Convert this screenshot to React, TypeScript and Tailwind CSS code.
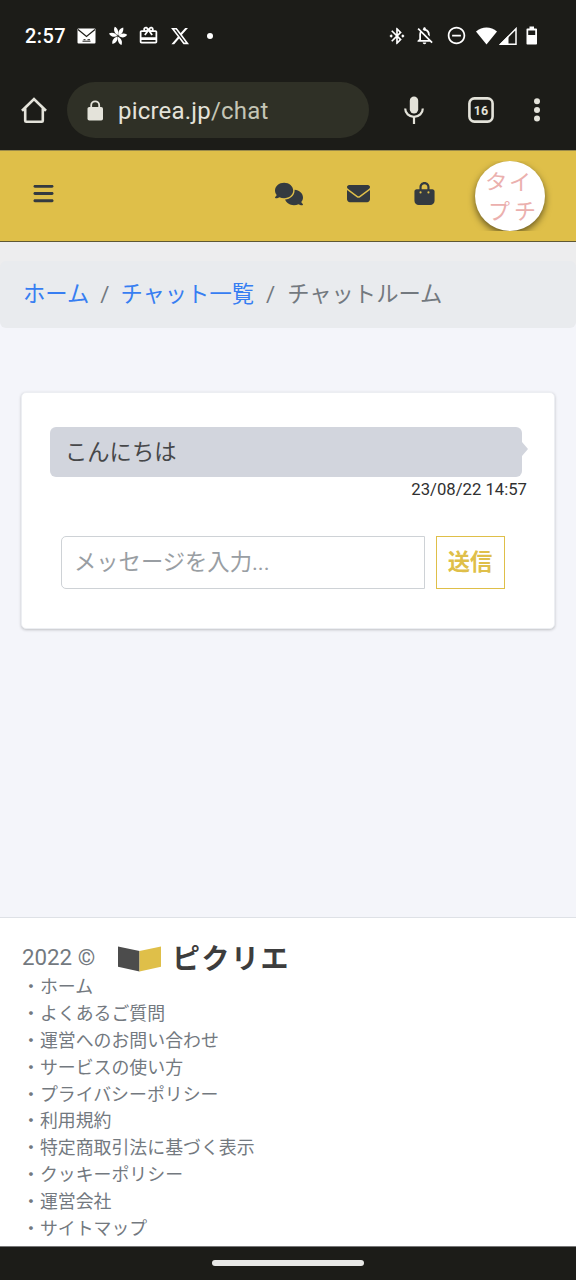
import { FaBagShopping, FaBars, FaComments, FaEnvelope, FaXTwitter } from 'react-icons/fa6'
import {
  MdBluetoothConnected,
  MdCardGiftcard,
  MdOutlineNotificationsOff,
  MdRemoveCircleOutline,
} from 'react-icons/md'

const footerLinks = [
  'ホーム',
  'よくあるご質問',
  '運営へのお問い合わせ',
  'サービスの使い方',
  'プライバシーポリシー',
  '利用規約',
  '特定商取引法に基づく表示',
  'クッキーポリシー',
  '運営会社',
  'サイトマップ',
]

function MailIcon() {
  return (
    <svg width="19" height="16" viewBox="0 0 19 16">
      <rect x="0.5" y="0.5" width="18" height="15" rx="1" fill="#fff" />
      <path d="M1 1.5l8.5 7 8.5-7" fill="none" stroke="#1c1c18" strokeWidth="1.2" />
      <path d="M5.5 13.2h8M6.5 11.7h2M10.5 11.7h2.5" stroke="#1c1c18" strokeWidth="1" />
    </svg>
  )
}

function FlowerIcon() {
  return (
    <svg width="20" height="20" viewBox="0 0 20 20" fill="#fff">
      <path d="M9.500 9.500C5.800 6.500 5.400 3.200 6.800.8c3 1.400 4.100 4.800 2.700 8.700z" />
      <path d="M10.300 9.500c-.6-4.300 1.500-7.200 4.900-8 .7 3.600-1.100 6.800-4.900 8z" />
      <path d="M9.300 10C6.200 11.800 2.600 10.500 1 7.400 4 5.800 7.600 6.800 9.300 10z" />
      <path d="M10.800 10c1.900-2.700 5.300-3.200 8.400-1.200-2.100 3-5.500 3.500-8.400 1.200z" />
      <path d="M9.600 10.500c.5 3.900-1.600 6.600-5.200 7.400-.7-3.600 1.500-6.500 5.200-7.400z" />
      <path d="M10.200 10.700c3.100 1.500 4.500 4.900 3.300 8.300-3-1.400-4.400-4.900-3.300-8.300z" />
    </svg>
  )
}

function StatusBar() {
  return (
    <div className="flex h-[70px] items-center justify-between pt-[1px] pr-[38px] pl-[25px] text-white">
      <div className="flex items-center">
        <span className="w-[52px] text-[20px] leading-none font-medium tracking-[0.4px]">2:57</span>
        <MailIcon />
        <span className="ml-[12px]"><FlowerIcon /></span>
        <MdCardGiftcard size={21} className="ml-[10px]" />
        <FaXTwitter size={20} className="ml-[11px]" />
        <span className="ml-[17px] size-[6px] rounded-full bg-white" />
      </div>
      <div className="flex items-center">
        <MdBluetoothConnected size={20} />
        <MdOutlineNotificationsOff size={21} className="ml-[7px]" />
        <MdRemoveCircleOutline size={21} className="ml-[11px]" />
        <svg className="ml-[9px]" width="21" height="18" viewBox="0 0 21 18">
          <path d="M0 4.500C6-1 15-1 21 4.500L10.500 17.500z" fill="#fff" />
        </svg>
        <svg className="ml-[2px]" width="18" height="18" viewBox="0 0 18 18">
          <path d="M1.500 17.200L17 1.700v15.500z" fill="none" stroke="#fff" strokeWidth="1.500" />
          <path d="M0.500 17.500L9.500 8.500v9z" fill="#fff" />
        </svg>
        <svg className="ml-[9px]" width="12" height="19" viewBox="0 0 12 19">
          <path d="M3.500 0.500h4.500v2h2.200q.8 0 .8.800v14.400q0 .8-.8.800H1.300q-.8 0-.8-.8V3.300q0-.8.8-.8h2.200z" fill="#fff" />
          <path d="M2.200 4.500h7v4.500h-7z" fill="#1c1c18" />
        </svg>
      </div>
    </div>
  )
}

function BrowserBar() {
  return (
    <div className="flex h-[80px] items-center text-[#e4e3da]">
      <svg className="ml-[21px]" width="26" height="27" viewBox="0 0 26 27" fill="none" stroke="currentColor" strokeWidth="2.600">
        <path d="M1 13.800L13 2l12 11.800M4.200 11.500v12.200c0 .6.5 1 1 1h15.600c.5 0 1-.4 1-1V11.500" />
      </svg>
      <div className="ml-[20px] flex h-[56px] w-[302px] items-center rounded-full bg-[#2f3026]">
        <svg className="ml-[20px]" width="17" height="21" viewBox="0 0 17 21">
          <rect x="0.500" y="7" width="15.500" height="13.500" rx="1.800" fill="currentColor" />
          <path d="M4.200 8V5.300a4 4 0 0 1 8 0V8" fill="none" stroke="currentColor" strokeWidth="1.800" />
        </svg>
        <span className="ml-[14px] pt-[2px] text-[24px] leading-none tracking-[0.2px]">
          picrea.jp<span className="text-[#c4c5b5]">/chat</span>
        </span>
      </div>
      <svg className="ml-[35px]" width="20" height="29" viewBox="0 0 20 29">
        <rect x="5.800" y="0.500" width="8.400" height="17" rx="4.200" fill="currentColor" />
        <path d="M1.200 12.500c0 4.700 3.700 8.300 8.800 8.300s8.800-3.600 8.800-8.300M10 21v7" fill="none" stroke="currentColor" strokeWidth="2.200" />
      </svg>
      <svg className="ml-[44px]" width="26" height="26" viewBox="0 0 26 26">
        <rect x="1.400" y="1.400" width="23.200" height="23.200" rx="5" fill="none" stroke="currentColor" strokeWidth="2.600" />
        <text x="13" y="17.500" textAnchor="middle" fontSize="12.500" fontWeight="700" fill="currentColor">16</text>
      </svg>
      <svg className="ml-[39px]" width="8" height="24" viewBox="0 0 8 24" fill="currentColor">
        <circle cx="4" cy="3.300" r="3" />
        <circle cx="4" cy="12" r="3" />
        <circle cx="4" cy="20.500" r="3" />
      </svg>
    </div>
  )
}

function Avatar() {
  return (
    <div className="mb-[1px] ml-[31px] h-[70px] w-[86px] overflow-hidden px-[8px]">
      <div className="size-[70px] rounded-full bg-white pt-[7px] text-[22px] leading-[29px] text-[#ebb0ae] shadow-[0_3px_7px_rgba(0,0,0,0.55)]">
        <div className="flex gap-[2px] pl-[10px]">
          <span className="w-[22px] rotate-[6deg]">タ</span>
          <span className="w-[22px]">イ</span>
        </div>
        <div className="flex gap-[3px] pl-[13px]">
          <span className="w-[23px]">プ</span>
          <span className="w-[22px]">チ</span>
        </div>
      </div>
    </div>
  )
}

function Header() {
  return (
    <header className="flex h-[92px] items-center border-t border-b border-t-[#9a8a4b] border-b-[#5f5834] bg-[#dfbf49] text-[#343a40]">
      <FaBars size={23} className="mb-[5px] ml-[32px]" />
      <FaComments size={28} className="mb-[5px] ml-[220px]" />
      <FaEnvelope size={23} className="mb-[5px] ml-[44px]" />
      <FaBagShopping size={23} className="mb-[5px] ml-[43px]" />
      <Avatar />
    </header>
  )
}

function Breadcrumb() {
  return (
    <div className="bg-[linear-gradient(#ededee_50%,#f4f5fa_50%)] pt-[19px]">
      <nav className="flex h-[67px] items-center rounded-[6px] bg-[#e9ebee] pl-[23px] text-[22.300px] text-[#73797f] shadow-[0_-8px_0_#ededee]">
        <a className="text-[#377ef2]">ホーム</a>
        <span className="mx-[11px]">/</span>
        <a className="text-[#377ef2]">チャット一覧</a>
        <span className="mr-[12px] ml-[12px]">/</span>
        <span>チャットルーム</span>
      </nav>
    </div>
  )
}

function ChatCard() {
  return (
    <section className="mx-[21px] mt-[64px] h-[237px] rounded-[5px] border border-[#eceef2] bg-white pt-[34px] shadow-[0_1px_3px_rgba(0,0,0,0.22)]">
      <div className="relative ml-[28px] flex h-[50px] w-[472px] items-center rounded-[6px] bg-[#d2d5dd] pt-[1px] pl-[15px] text-[22.300px] text-[#464749]">
        こんにちは
        <span className="absolute top-[15px] left-full border-y-[7px] border-l-[6px] border-y-transparent border-l-[#d2d5dd]" />
      </div>
      <div className="mr-[27px] pt-[2px] text-right text-[16.700px] leading-[22px] text-[#303030]">23/08/22 14:57</div>
      <form className="mt-[35px] flex h-[53px] pl-[39px]">
        <input
          className="w-[363.500px] rounded-l-[5px] border border-[#ced2d6] pl-[12px] text-[22.300px] placeholder:text-[#999ea3]"
          placeholder="メッセージを入力..."
        />
        <button type="button" className="ml-[11px] w-[69px] border border-[#dfbf49] text-[22.300px] font-bold text-[#dfbf49]">
          送信
        </button>
      </form>
    </section>
  )
}

function Footer() {
  return (
    <footer className="h-[329px] border-t border-[#dee1e6] bg-white pt-[26px] text-[#73797f]">
      <div className="flex h-[29px] items-center pl-[22px]">
        <span className="w-[96px] pb-[2px] text-[22.300px] leading-none">2022 ©</span>
        <svg width="43" height="26" viewBox="0 0 43 26">
          <path d="M0 0.500L21.500 5v20.500L0 20.800z" fill="#4c4c4c" />
          <path d="M43 0.500L21.500 5v20.500L43 20.800z" fill="#dfbf49" />
        </svg>
        <span className="ml-[11px] pt-[3px] text-[28px] leading-none font-bold tracking-[1.500px] text-[#3d3d3d]">ピクリエ</span>
      </div>
      <ul className="pt-[1px] pl-[22px] text-[17.900px]">
        {footerLinks.map((link) => (
          <li key={link} className="flex h-[26.800px] items-center leading-none">
            ・{link}
          </li>
        ))}
      </ul>
    </footer>
  )
}

export default function App() {
  return (
    <div className="flex h-[1280px] w-[576px] flex-col overflow-hidden bg-[#f4f5fa] font-[Roboto,'Noto_Sans_CJK_JP',sans-serif]">
      <div className="bg-[#1c1c18]">
        <StatusBar />
        <BrowserBar />
      </div>
      <Header />
      <Breadcrumb />
      <main className="flex-1">
        <ChatCard />
      </main>
      <Footer />
      <div className="flex h-[34px] items-center justify-center border-t border-[#777] bg-[#1c1c18] pb-[1px]">
        <div className="h-[6px] w-[152px] rounded-full bg-[#e8e8e6]" />
      </div>
    </div>
  )
}
